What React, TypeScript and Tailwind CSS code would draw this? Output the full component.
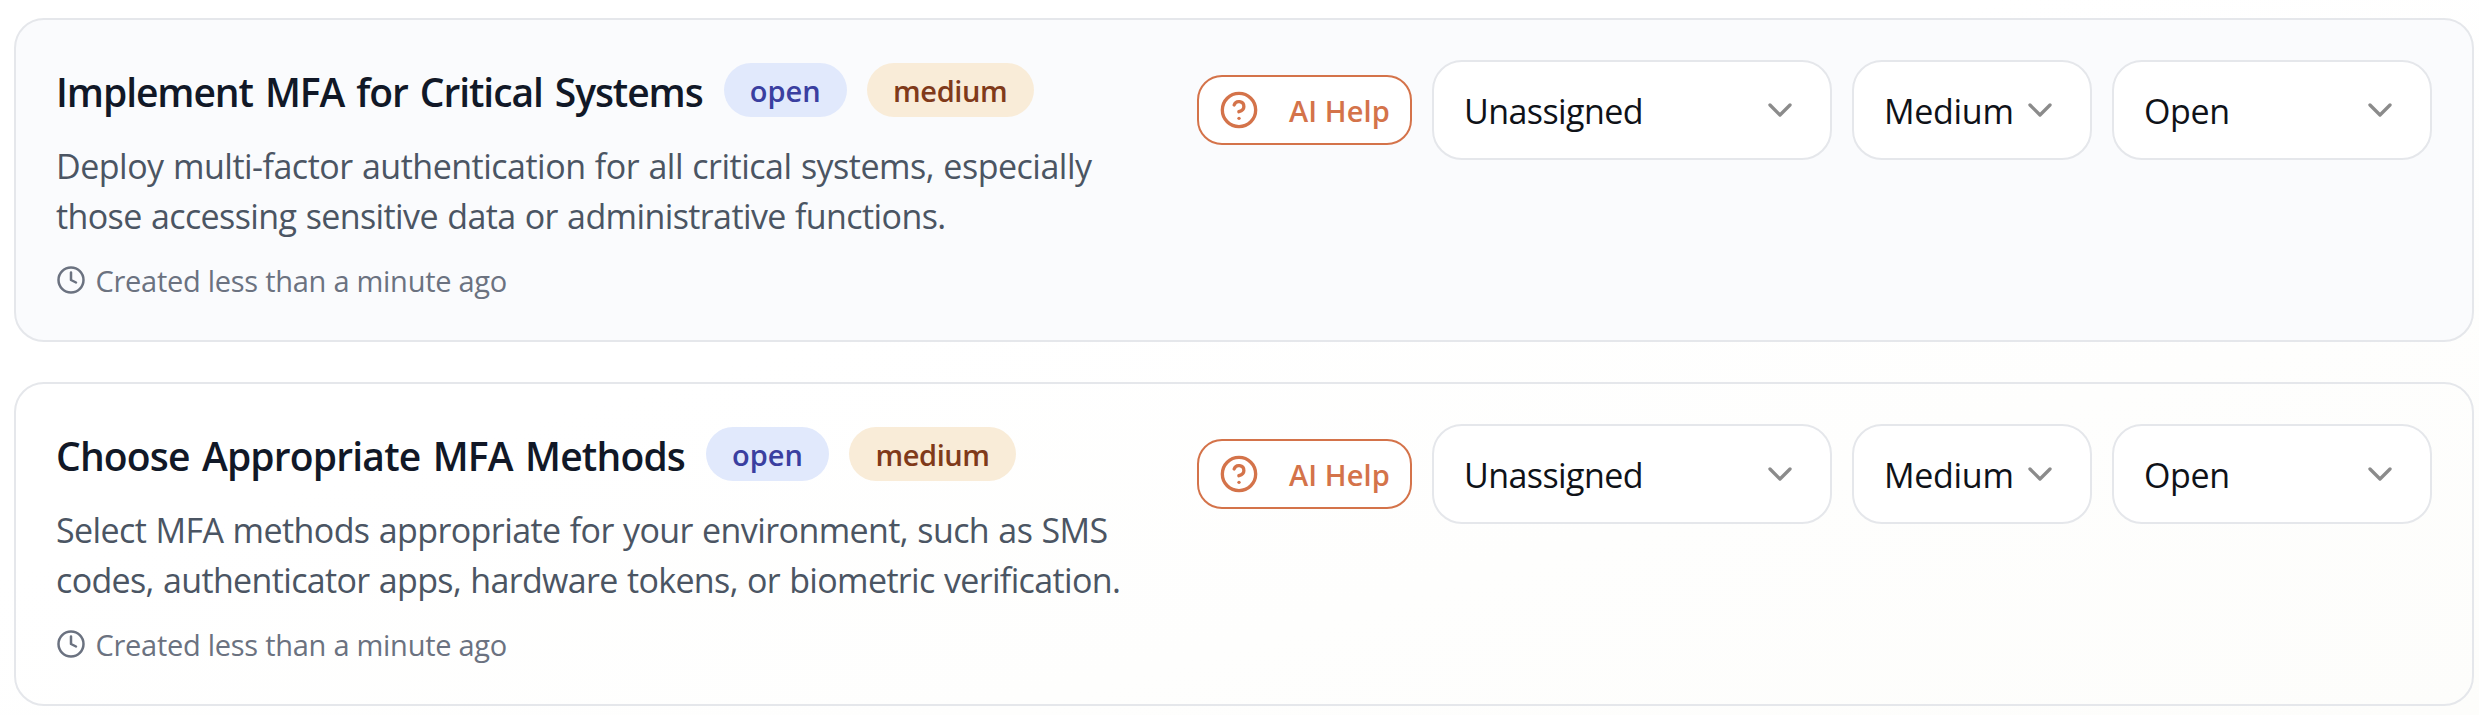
import { ChevronDown, CircleQuestionMark, Clock } from 'lucide-react';

type Line = { text: string; tracking: string };

type Task = {
  title: Line;
  lines: Line[];
  surface: string;
};

const tasks: Task[] = [
  {
    title: { text: 'Implement MFA for Critical Systems', tracking: 'tracking-[-1.08px]' },
    lines: [
      {
        text: 'Deploy multi-factor authentication for all critical systems, especially',
        tracking: 'tracking-[-0.5px]',
      },
      {
        text: 'those accessing sensitive data or administrative functions.',
        tracking: 'tracking-[-0.6px]',
      },
    ],
    surface: 'bg-[#fafbfd]',
  },
  {
    title: { text: 'Choose Appropriate MFA Methods', tracking: 'tracking-[-0.82px]' },
    lines: [
      {
        text: 'Select MFA methods appropriate for your environment, such as SMS',
        tracking: 'tracking-[-0.59px]',
      },
      {
        text: 'codes, authenticator apps, hardware tokens, or biometric verification.',
        tracking: 'tracking-[-0.645px]',
      },
    ],
    surface: 'bg-transparent',
  },
];

function Badge({ label, className }: { label: string; className: string }) {
  return (
    <span
      className={`flex h-[54px] items-center justify-center rounded-full pt-[2px] text-[29px] leading-[50px] font-semibold ${className}`}
    >
      {label}
    </span>
  );
}

function Select({ value, className }: { value: string; className: string }) {
  return (
    <button
      type="button"
      className={`flex h-[100px] items-center justify-between rounded-[30px] border-2 border-[#e5e7eb] bg-white px-[30px] text-[34px] leading-[50px] text-[#0f1218] ${className}`}
    >
      <span className="pt-[2px]">{value}</span>
      <ChevronDown className="size-10 shrink-0 text-black opacity-45" strokeWidth={2} />
    </button>
  );
}

function TaskCard({ task }: { task: Task }) {
  return (
    <article
      className={`flex h-[324px] items-start justify-between rounded-[30px] border-2 border-[#e5e7eb] p-10 ${task.surface}`}
    >
      <div className="flex flex-col">
        <div className="flex h-[60px] items-center gap-5">
          <h3
            className={`pt-[3px] pr-px text-[39px] leading-[56px] font-semibold whitespace-nowrap text-[#111827] [word-spacing:3px] ${task.title.tracking}`}
          >
            {task.title.text}
          </h3>
          <Badge label="open" className="w-[123px] bg-[#e1e9fc] text-[#3a3fa0]" />
          <Badge label="medium" className="w-[167px] bg-[#f9ecd8] tracking-[-0.42px] text-[#803a1a]" />
        </div>
        <p className="mt-[21px] text-[34px] leading-[50px] text-[#4b5563] [word-spacing:1px]">
          {task.lines.map((line) => (
            <span key={line.text} className={`block whitespace-nowrap ${line.tracking}`}>
              {line.text}
            </span>
          ))}
        </p>
        <div className="mt-[19px] flex h-10 items-center gap-[9.5px] text-[29px] leading-10 text-[#6b7280]">
          <Clock className="size-[30px]" strokeWidth={2} />
          <span className="pt-px tracking-[-0.27px]">Created less than a minute ago</span>
        </div>
      </div>
      <div className="flex items-center gap-5">
        <button
          type="button"
          className="flex h-[70px] w-[215px] items-center rounded-[25px] border-2 border-[#d4734a] bg-white pl-5 text-[29px] leading-[50px] font-semibold text-[#d4734a]"
        >
          <CircleQuestionMark className="mr-[30px] size-10 shrink-0" strokeWidth={2} />
          <span className="pt-[2px] tracking-[0.1px] whitespace-nowrap">AI Help</span>
        </button>
        <Select value="Unassigned" className="w-[400px] tracking-[-0.58px]" />
        <Select value="Medium" className="w-[240px] tracking-[-0.3px]" />
        <Select value="Open" className="w-[320px] tracking-[-0.4px]" />
      </div>
    </article>
  );
}

export default function App() {
  return (
    <main className="flex h-[715px] w-[2479px] flex-col gap-10 overflow-hidden bg-linear-to-br from-[#ffffff] from-40% to-[#fdfdfb] pt-[18px] pr-[5px] pl-[14px] font-['Open_Sans',sans-serif]">
      {tasks.map((task) => (
        <TaskCard key={task.title.text} task={task} />
      ))}
    </main>
  );
}
